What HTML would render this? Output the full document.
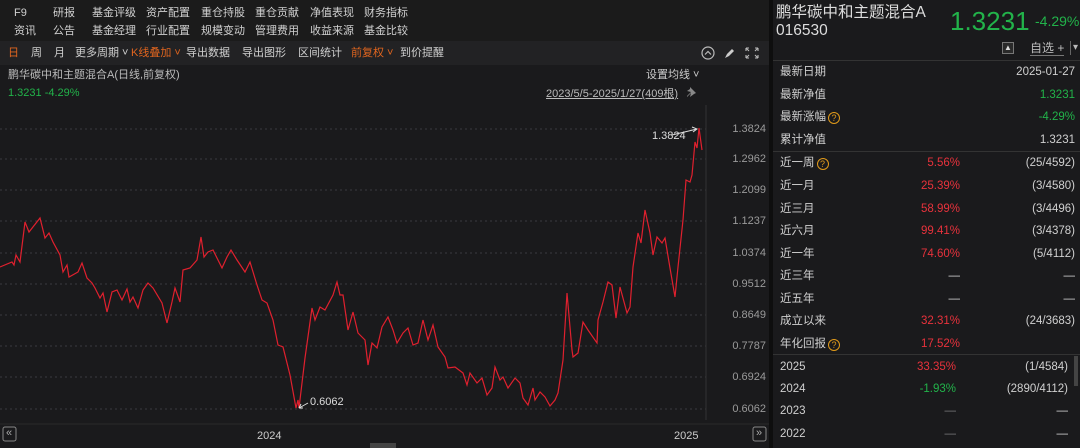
<!DOCTYPE html>
<html><head><meta charset="utf-8"><style>
*{margin:0;padding:0;box-sizing:border-box}
body{width:1080px;height:448px;background:#0e0e0e;font-family:"Liberation Sans","Noto Sans CJK SC",sans-serif;color:#d0d0d0;position:relative;overflow:hidden;font-size:11px;line-height:14px}
.a{position:absolute;white-space:nowrap}
#left{position:absolute;left:0;top:0;width:769px;height:448px;background:#1a1a1c}
#nav{position:absolute;left:0;top:0;width:769px;height:41px;background:#1b1b1b}
#tb{position:absolute;left:0;top:41px;width:769px;height:24px;background:#222224}
#right{position:absolute;left:773px;top:0;width:307px;height:448px;background:#1a1a1c}
.r{position:absolute;left:0;width:307px;height:22.5px;font-size:11.5px}
.r span{position:absolute;top:4px;line-height:14px}
.red{color:#e8323c}.grn{color:#22b34a}.org{color:#e0651f}
.q{display:inline-block;width:12px;height:12px;border:1px solid #e09a1a;border-radius:50%;color:#e09a1a;font-size:9px;line-height:10px;text-align:center;vertical-align:-1px;margin-left:2px;font-style:normal}
.ax{position:absolute;left:718px;font-size:11px;color:#9a9a9a;width:48px;text-align:right}
</style></head><body>
<div id="left">
<div id="nav">
<div class="a" style="left:14px;top:6px">F9</div>
<div class="a" style="left:53px;top:6px">研报</div>
<div class="a" style="left:92px;top:6px">基金评级</div>
<div class="a" style="left:146px;top:6px">资产配置</div>
<div class="a" style="left:201px;top:6px">重仓持股</div>
<div class="a" style="left:255px;top:6px">重仓贡献</div>
<div class="a" style="left:310px;top:6px">净值表现</div>
<div class="a" style="left:364px;top:6px">财务指标</div>
<div class="a" style="left:14px;top:24px">资讯</div>
<div class="a" style="left:53px;top:24px">公告</div>
<div class="a" style="left:92px;top:24px">基金经理</div>
<div class="a" style="left:146px;top:24px">行业配置</div>
<div class="a" style="left:201px;top:24px">规模变动</div>
<div class="a" style="left:255px;top:24px">管理费用</div>
<div class="a" style="left:310px;top:24px">收益来源</div>
<div class="a" style="left:364px;top:24px">基金比较</div>
</div>
<div id="tb">
<div class="a org" style="left:8px;top:5px">日</div>
<div class="a" style="left:31px;top:5px">周</div>
<div class="a" style="left:54px;top:5px">月</div>
<div class="a" style="left:75px;top:5px">更多周期 ˅</div>
<div class="a org" style="left:131px;top:5px">K线叠加 ˅</div>
<div class="a" style="left:186px;top:5px">导出数据</div>
<div class="a" style="left:242px;top:5px">导出图形</div>
<div class="a" style="left:298px;top:5px">区间统计</div>
<div class="a org" style="left:351px;top:5px">前复权 ˅</div>
<div class="a" style="left:400px;top:5px">到价提醒</div>
<svg class="a" style="left:700px;top:4px" width="60" height="16"><circle cx="8" cy="8" r="6" fill="none" stroke="#bbb" stroke-width="1.2"/><path d="M5 9.5L8 6.5L11 9.5" fill="none" stroke="#bbb" stroke-width="1.2"/><path d="M25 13l2-4 5-5 2 2-5 5z" fill="#ccc"/><path d="M46 3h3M46 3v3M58 3h-3M58 3v3M46 13h3M46 13v-3M58 13h-3M58 13v-3M46 3l3 3M58 3l-3 3M46 13l3-3M58 13l-3-3" stroke="#bbb" stroke-width="1.1"/></svg>
</div>
<div class="a" style="left:8px;top:68px;color:#bbb">鹏华碳中和主题混合A(日线,前复权)</div>
<div class="a grn" style="left:8px;top:86px">1.3231 -4.29%</div>
<div class="a" style="left:646px;top:68px;color:#ccc">设置均线 ˅</div>
<div class="a" style="left:546px;top:87px;color:#bbb;text-decoration:underline">2023/5/5-2025/1/27(409根)</div>
<svg class="a" style="left:686px;top:86px" width="12" height="12"><path d="M4 1l6 6-2 1-4 3 1-4-4 4 0-1 4-4-4-1 3-2z" fill="#888"/></svg>
<svg class="a" style="left:0;top:0" width="769" height="448">
<g stroke="#3a3a40" stroke-dasharray="2,3" stroke-width="1">
<path d="M0 129H706M0 159H706M0 190H706M0 221H706M0 253H706M0 284H706M0 315H706M0 346H706M0 377H706M0 409H706"/>
</g>
<path d="M706 105V420" stroke="#333" stroke-width="1"/>
<path d="M0 424H769" stroke="#2a2a2a"/>
<polyline fill="none" stroke="#e0202e" stroke-width="1.2" points="0,267 12,262 14,265 16,255 20,262 25,222 29,232 40,218 45,238 49,233 53,242 60,255 63,272 67,265 69,277 78,272 82,263 87,278 92,283 95,288 100,298 103,293 107,312 112,292 117,290 122,300 127,289 130,302 133,297 138,308 143,290 148,283 153,288 162,303 167,323 172,302 175,288 180,302 183,270 190,268 197,260 201,237 204,257 208,252 213,250 222,268 227,257 231,250 237,260 245,272 250,262 257,285 262,300 267,303 273,320 278,345 283,347 290,375 296,408 298,400 299,408 305,358 312,308 315,320 320,307 325,310 333,295 337,282 340,295 343,295 348,330 353,312 358,333 365,340 368,365 372,343 377,348 382,327 388,317 393,330 397,343 403,333 408,328 413,345 418,343 423,320 428,340 433,325 438,347 445,357 448,368 455,367 463,373 467,385 470,373 477,383 482,378 487,395 492,388 495,367 500,380 503,377 508,388 515,378 520,383 523,398 528,405 533,388 535,400 540,392 545,397 550,406 555,400 558,393 563,360 567,293 572,350 573,357 578,353 583,322 588,330 597,343 598,320 603,302 608,282 612,285 616,318 620,287 627,313 630,307 633,267 638,233 641,243 645,210 650,233 653,255 657,237 662,243 665,238 670,268 675,297 678,267 683,220 686,180 690,182 692,175 695,142 697,148 699,128 702,150"/>
<path d="M672 135L697 129M692 127l5 2-4 3" stroke="#ddd" fill="none" stroke-width="1"/>
<path d="M299 408L308 403M299 408l2-4M299 408l4 0" stroke="#ddd" fill="none" stroke-width="1"/>
<rect x="3" y="427" width="13" height="14" rx="2" fill="none" stroke="#888"/>
<rect x="753" y="427" width="13" height="14" rx="2" fill="none" stroke="#888"/>
<rect x="370" y="443" width="26" height="5" fill="#444"/>
</svg>
<div class="a" style="left:652px;top:129px;color:#ddd">1.3824</div>
<div class="a" style="left:310px;top:395px;color:#ddd">0.6062</div>
<div class="ax" style="top:122px">1.3824</div>
<div class="ax" style="top:152px">1.2962</div>
<div class="ax" style="top:183px">1.2099</div>
<div class="ax" style="top:214px">1.1237</div>
<div class="ax" style="top:246px">1.0374</div>
<div class="ax" style="top:277px">0.9512</div>
<div class="ax" style="top:308px">0.8649</div>
<div class="ax" style="top:339px">0.7787</div>
<div class="ax" style="top:370px">0.6924</div>
<div class="ax" style="top:402px">0.6062</div>
<div class="a" style="left:6px;top:426px;color:#aaa">«</div>
<div class="a" style="left:756px;top:426px;color:#aaa">»</div>
<div class="a" style="left:257px;top:429px;color:#ccc">2024</div>
<div class="a" style="left:674px;top:429px;color:#ccc">2025</div>
</div>
<div id="right">
<div class="a" style="left:3px;top:4px;font-size:15.5px;line-height:18px;color:#ddd">鹏华碳中和主题混合A</div>
<div class="a" style="left:3px;top:22px;font-size:15.5px;line-height:18px;color:#ddd">016530</div>
<div class="a grn" style="left:177px;top:6px;font-size:26px;line-height:30px">1.3231</div>
<div class="a grn" style="left:262px;top:13px;font-size:14px;line-height:17px">-4.29%</div>
<div class="a" style="left:229px;top:42px;width:12px;height:12px;border:1px solid #777;background:#2a2a2a;font-size:8px;line-height:10px;text-align:center;color:#ddd">▲</div>
<div class="a" style="left:257px;top:41px;color:#bbb;font-size:12px;border-bottom:1px solid #777">自选 +</div>
<div class="a" style="left:297px;top:41px;color:#bbb;font-size:10px;border-left:1px solid #666;padding-left:2px">▾</div>
<div class="a" style="left:0;top:60px;width:307px;height:1px;background:#333"></div>
<div class="r" style="top:61px"><span style="left:7px">最新日期</span><span style="right:5px">2025-01-27</span></div>
<div class="r" style="top:84px"><span style="left:7px">最新净值</span><span class="grn" style="right:5px">1.3231</span></div>
<div class="r" style="top:106px"><span style="left:7px">最新涨幅<i class="q">?</i></span><span class="grn" style="right:5px">-4.29%</span></div>
<div class="r" style="top:129px"><span style="left:7px">累计净值</span><span style="right:5px">1.3231</span></div>
<div class="a" style="left:0;top:151px;width:307px;height:1px;background:#333"></div>
<div class="r" style="top:152px"><span style="left:7px">近一周<i class="q">?</i></span><span class="red" style="right:120px">5.56%</span><span style="right:5px">(25/4592)</span></div>
<div class="r" style="top:175px"><span style="left:7px">近一月</span><span class="red" style="right:120px">25.39%</span><span style="right:5px">(3/4580)</span></div>
<div class="r" style="top:198px"><span style="left:7px">近三月</span><span class="red" style="right:120px">58.99%</span><span style="right:5px">(3/4496)</span></div>
<div class="r" style="top:220px"><span style="left:7px">近六月</span><span class="red" style="right:120px">99.41%</span><span style="right:5px">(3/4378)</span></div>
<div class="r" style="top:243px"><span style="left:7px">近一年</span><span class="red" style="right:120px">74.60%</span><span style="right:5px">(5/4112)</span></div>
<div class="r" style="top:265px"><span style="left:7px">近三年</span><span style="right:120px">—</span><span style="right:5px">—</span></div>
<div class="r" style="top:288px"><span style="left:7px">近五年</span><span style="right:120px">—</span><span style="right:5px">—</span></div>
<div class="r" style="top:310px"><span style="left:7px">成立以来</span><span class="red" style="right:120px">32.31%</span><span style="right:5px">(24/3683)</span></div>
<div class="r" style="top:333px"><span style="left:7px">年化回报<i class="q">?</i></span><span class="red" style="right:120px">17.52%</span></div>
<div class="a" style="left:0;top:354px;width:307px;height:1px;background:#333"></div>
<div class="r" style="top:356px"><span style="left:7px">2025</span><span class="red" style="right:124px">33.35%</span><span style="right:12px">(1/4584)</span></div>
<div class="r" style="top:378px"><span style="left:7px">2024</span><span class="grn" style="right:124px">-1.93%</span><span style="right:12px">(2890/4112)</span></div>
<div class="r" style="top:400px"><span style="left:7px">2023</span><span style="right:124px;color:#777">—</span><span style="right:12px">—</span></div>
<div class="r" style="top:423px"><span style="left:7px">2022</span><span style="right:124px;color:#777">—</span><span style="right:12px">—</span></div>
<div class="a" style="left:301px;top:356px;width:4px;height:30px;background:#444"></div>
</div>
</body></html>
